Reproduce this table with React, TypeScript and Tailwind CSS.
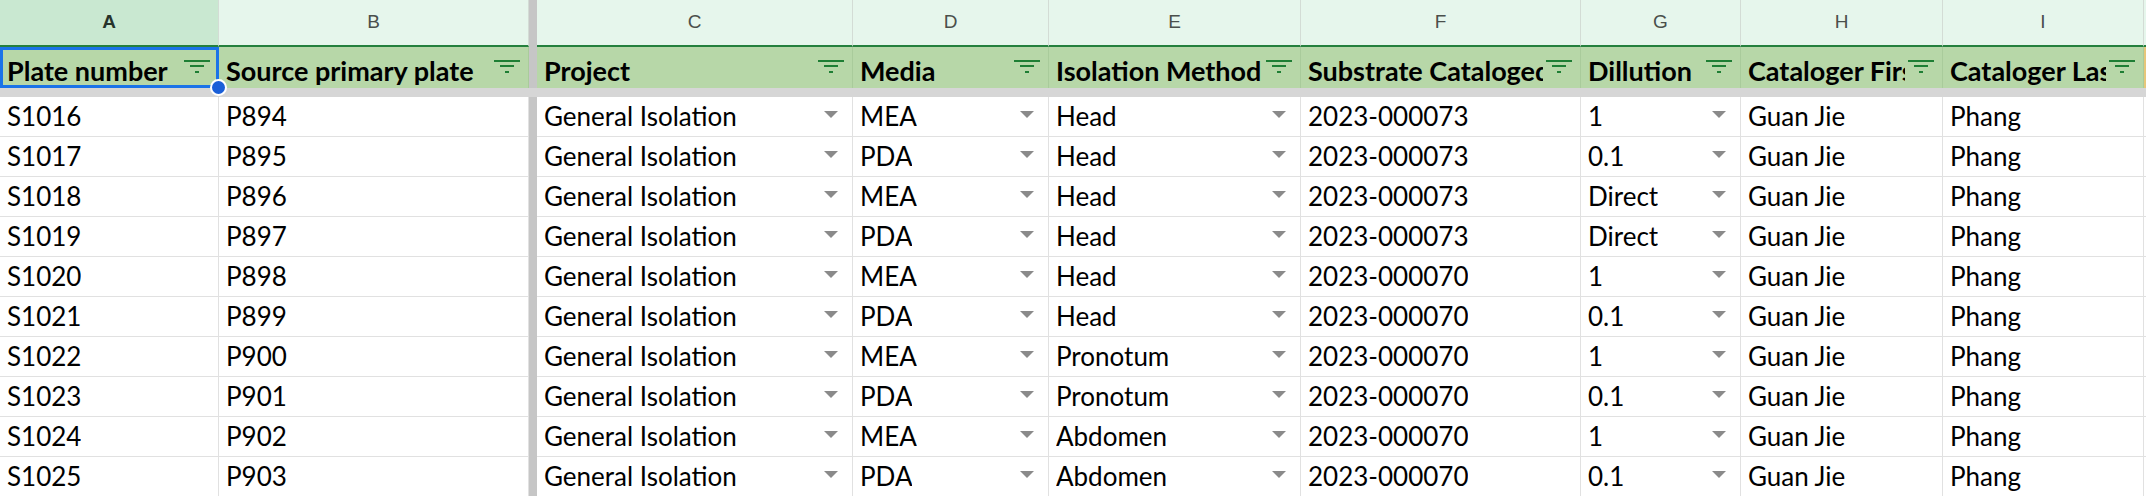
import React from "react";

const GRID =
  "grid grid-cols-[219px_310px_8px_316px_196px_252px_280px_160px_202px_201px_1fr]";

const rows: string[][] = [
  ["S1016", "P894", "General Isolation", "MEA", "Head", "2023-000073", "1"],
  ["S1017", "P895", "General Isolation", "PDA", "Head", "2023-000073", "0.1"],
  ["S1018", "P896", "General Isolation", "MEA", "Head", "2023-000073", "Direct"],
  ["S1019", "P897", "General Isolation", "PDA", "Head", "2023-000073", "Direct"],
  ["S1020", "P898", "General Isolation", "MEA", "Head", "2023-000070", "1"],
  ["S1021", "P899", "General Isolation", "PDA", "Head", "2023-000070", "0.1"],
  ["S1022", "P900", "General Isolation", "MEA", "Pronotum", "2023-000070", "1"],
  ["S1023", "P901", "General Isolation", "PDA", "Pronotum", "2023-000070", "0.1"],
  ["S1024", "P902", "General Isolation", "MEA", "Abdomen", "2023-000070", "1"],
  ["S1025", "P903", "General Isolation", "PDA", "Abdomen", "2023-000070", "0.1"],
];

const FONT = "font-['Lato','Open_Sans',sans-serif]";

function FilterIcon() {
  return (
    <svg width="26" height="14" viewBox="0 0 26 14" className="shrink-0">
      <rect x="0" y="0" width="26" height="2" fill="#1e7e34" />
      <rect x="6" y="5" width="14" height="2" fill="#1e7e34" />
      <rect x="11" y="11" width="4" height="2" fill="#1e7e34" />
    </svg>
  );
}

function DropArrow() {
  return (
    <svg width="14" height="7" viewBox="0 0 14 7" className="shrink-0 self-center">
      <path d="M0 0 L14 0 L7 7 Z" fill="#8a8a8a" />
    </svg>
  );
}

function Letter({ l, sel }: { l: string; sel?: boolean }) {
  return (
    <div
      className={
        "flex items-center justify-center border-r border-[#d3dcd5] border-b-2 border-b-[#24803d] font-['Liberation_Sans',Arial,sans-serif] text-[19px] " +
        (sel ? "bg-[#c9e8d1] font-bold text-[#27332b]" : "bg-[#e6f6ec] text-[#4a4f4b]")
      }
    >
      {l}
    </div>
  );
}

function Bar() {
  return <div className="bg-[#c6c6c6]" />;
}

function HeadCell({ t, sel }: { t: string; sel?: boolean }) {
  return (
    <div className="relative flex items-end gap-[3px] border-r border-[#a9cb9b] bg-[#b7d7a8] pl-[7px] pr-[8px] pb-[1.5px]">
      <div className="min-w-0 flex-1 overflow-hidden whitespace-nowrap text-[27px] font-bold leading-[33px] text-black">
        {t}
      </div>
      <div className="self-center pt-[1px]">
        <FilterIcon />
      </div>
      {sel && (
        <>
          <div className="pointer-events-none absolute left-0 top-0 -right-px bottom-0 border-[3px] border-[#1a73e8]" />
          <div className="absolute -bottom-[8px] -right-[9px] z-10 h-[17px] w-[17px] rounded-full border-2 border-white bg-[#1a5fd8]" />
        </>
      )}
    </div>
  );
}

function DataCell({ t, dd }: { t: string; dd?: boolean }) {
  return (
    <div className="flex items-end justify-between border-r border-b border-[#e1e1e1] bg-white pl-[7px] pr-[14px] pb-[4px]">
      <div className="min-w-0 overflow-hidden whitespace-nowrap text-[26px] leading-[32px] text-black">
        {t}
      </div>
      {dd && <DropArrow />}
    </div>
  );
}

export default function App() {
  return (
    <div className={"h-[496px] w-[2146px] overflow-hidden bg-white " + FONT}>
      <div className={GRID + " grid-rows-[47px_41px_9px_repeat(10,40px)]"}>
        {/* letters row */}
        <Letter l="A" sel />
        <Letter l="B" />
        <div className="bg-[#c6c6c6]" />
        <Letter l="C" />
        <Letter l="D" />
        <Letter l="E" />
        <Letter l="F" />
        <Letter l="G" />
        <Letter l="H" />
        <Letter l="I" />
        <Letter l="" />

        {/* header row */}
        <HeadCell t="Plate number" sel />
        <HeadCell t="Source primary plate" />
        <Bar />
        <HeadCell t="Project" />
        <HeadCell t="Media" />
        <HeadCell t="Isolation Method" />
        <HeadCell t="Substrate Cataloged" />
        <HeadCell t="Dillution" />
        <HeadCell t="Cataloger First" />
        <HeadCell t="Cataloger Last" />
        <div className="border-l-[3px] border-[#e6c77a] bg-[#b7d7a8]" />

        {/* freeze band */}
        <div className="col-span-11 bg-[#d6d6d6]" />

        {rows.map((r, i) => (
          <React.Fragment key={i}>
            <DataCell t={r[0]} />
            <DataCell t={r[1]} />
            <Bar />
            <DataCell t={r[2]} dd />
            <DataCell t={r[3]} dd />
            <DataCell t={r[4]} dd />
            <DataCell t={r[5]} />
            <DataCell t={r[6]} dd />
            <DataCell t="Guan Jie" />
            <DataCell t="Phang" />
            <DataCell t="" />
          </React.Fragment>
        ))}
      </div>
    </div>
  );
}
